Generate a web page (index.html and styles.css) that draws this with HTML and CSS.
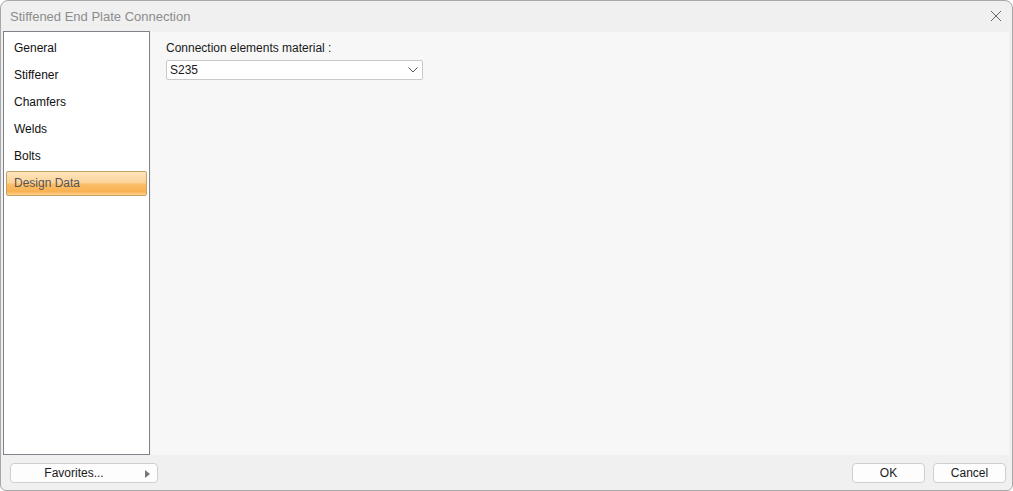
FILE: index.html
```html
<!DOCTYPE html>
<html>
<head>
<meta charset="utf-8">
<link rel="stylesheet" href="styles.css">
</head>
<body>
<div class="window">
  <div class="titlebar">
    <span class="title">Stiffened End Plate Connection</span>
    <svg class="close" width="12" height="12" viewBox="0 0 12 12"><path d="M1 1L11 11M11 1L1 11" stroke="#666" stroke-width="1" fill="none"/></svg>
  </div>
  <div class="main">
    <div class="sidebar">
      <div class="item">General</div>
      <div class="item">Stiffener</div>
      <div class="item">Chamfers</div>
      <div class="item">Welds</div>
      <div class="item">Bolts</div>
      <div class="item selected">Design Data</div>
    </div>
    <div class="content">
      <div class="label">Connection elements material :</div>
      <div class="select">
        <span>S235</span>
        <svg width="10" height="6" viewBox="0 0 10 6"><path d="M0.5 0.5L5 5L9.5 0.5" stroke="#555" stroke-width="1" fill="none"/></svg>
      </div>
    </div>
  </div>
  <div class="footer">
    <div class="btn fav"><span>Favorites...</span><svg class="tri" width="5" height="8" viewBox="0 0 5 8"><path d="M0 0L5 4L0 8Z" fill="#777"/></svg></div>
    <div class="spacer"></div>
    <div class="btn ok">OK</div>
    <div class="btn cancel">Cancel</div>
  </div>
</div>
</body>
</html>
```
FILE: styles.css
```css
html, body { margin: 0; padding: 0; }
body {
  width: 1013px; height: 491px; overflow: hidden; background: #fff;
  font-family: "Liberation Sans", Arial, sans-serif; font-size: 12px; color: #1a1a1a;
}
.window {
  box-sizing: border-box; width: 1013px; height: 491px;
  border: 1px solid #a8a8a8; border-radius: 8px 8px 6px 6px;
  background: #f0f0f0; display: flex; flex-direction: column; overflow: hidden;
}
.titlebar {
  height: 30px; flex: none; display: flex; align-items: center;
  padding: 0 10px 0 9px; justify-content: space-between;
}
.title { color: #8c8c8c; font-size: 13px; }
.main { flex: 1; display: flex; padding-left: 2px; padding-right: 3px; }
.sidebar {
  width: 147px; box-sizing: border-box; background: #fff;
  border: 1px solid #7d8389; padding: 3px 2px 2px;
  display: flex; flex-direction: column; margin-right: 1px;
}
.item { height: 27px; line-height: 27px; padding-left: 8px; color: #111; }
.item.selected {
  height: 23px; line-height: 23px; margin-top: 1px; padding-left: 7px;
  border: 1px solid #c5a265; border-radius: 2px; color: #555;
  background: linear-gradient(#fde4bd 0%, #fcd49c 45%, #fbbd66 55%, #f9b253 85%, #fcd28e 100%);
}
.content { flex: 1; background: #f7f7f7; padding: 9px 15px; border-top: 1px solid #f2f2f2; }
.label { height: 16px; line-height: 14px; }
.select {
  margin-top: 3px; width: 257px; height: 20px; box-sizing: border-box;
  background: #fff; border: 1px solid #c9c9c9; border-radius: 2px;
  display: flex; align-items: center; justify-content: space-between;
  padding: 0 4px 0 3px;
}
.footer { height: 35px; flex: none; display: flex; align-items: center; padding: 0 6px 0 9px; gap: 8px; }
.spacer { flex: 1; }
.btn {
  height: 20px; box-sizing: border-box; border: 1px solid #cfcfcf; border-radius: 4px;
  background: #fdfdfd; display: flex; align-items: center; justify-content: center;
  margin-top: 1px;
}
.fav { width: 148px; position: relative; }
.fav span { margin-right: 20px; }
.tri { position: absolute; right: 7px; top: 6px; }
.ok, .cancel { width: 73px; }
```
